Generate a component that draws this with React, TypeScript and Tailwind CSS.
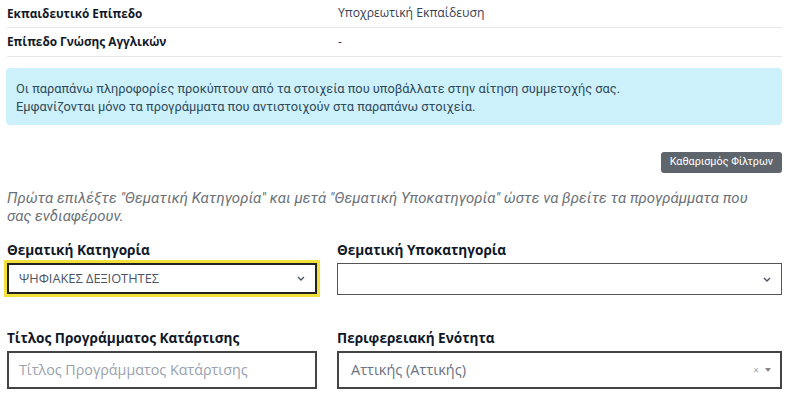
import React from 'react';

const sans = { fontFamily: '"Open Sans", "Noto Sans", sans-serif' };

function Chevron() {
  return (
    <svg width="8" height="5" viewBox="0 0 8 5" className="text-gray-600">
      <path d="M1 1 L4 4 L7 1" fill="none" stroke="currentColor" strokeWidth="1.4" />
    </svg>
  );
}

export default function App() {
  return (
    <div className="w-[794px] h-[398px] bg-white overflow-hidden pl-[7px] pr-[12px] font-['Open_Sans',sans-serif]">
      {/* στοιχεία αίτησης */}
      <div>
        <div className="flex h-[28px] items-center border-b border-gray-200">
          <div className="w-[331px] text-[11.8px] font-bold text-gray-900">Εκπαιδευτικό Επίπεδο</div>
          <div className="text-[12.2px] text-gray-700">Υποχρεωτική Εκπαίδευση</div>
        </div>
        <div className="flex h-[29px] items-center border-b border-gray-200">
          <div className="w-[331px] text-[11.8px] font-bold text-gray-900">Επίπεδο Γνώσης Αγγλικών</div>
          <div className="text-[12.2px] text-gray-700">-</div>
        </div>
      </div>

      <div className="ml-[-1px] mt-[11px] h-[57px] rounded bg-[#cdf1fb] px-[10px] pt-[12px] font-['Roboto',sans-serif] text-[12.8px] leading-[18px] text-[#2f4a5a]">
        <p>Οι παραπάνω πληροφορίες προκύπτουν από τα στοιχεία που υποβάλλατε στην αίτηση συμμετοχής σας.</p>
        <p>Εμφανίζονται μόνο τα προγράμματα που αντιστοιχούν στα παραπάνω στοιχεία.</p>
      </div>

      <div className="mt-[27px] flex justify-end">
        <button className="h-[21px] rounded-[3px] bg-[#5e656c] px-[9px] font-['Roboto',sans-serif] text-[10.8px] text-white">
          Καθαρισμός Φίλτρων
        </button>
      </div>

      <p className="mt-[16px] pr-[8px] font-['Roboto',sans-serif] text-[15px] italic leading-[18px] text-[#6b7178]">
        Πρώτα επιλέξτε "Θεματική Κατηγορία" και μετά "Θεματική Υποκατηγορία" ώστε να βρείτε τα προγράμματα που σας ενδιαφέρουν.
      </p>

      <div className="mt-[15px] grid grid-cols-[310px_1fr] gap-x-[20px]" style={sans}>
        <div>
          <div className="mb-[3px] text-[13.6px] font-bold leading-[20px] text-gray-900">Θεματική Κατηγορία</div>
          <div className="flex h-[31px] items-center justify-between border-2 border-[#222] px-[10px] outline outline-[3px] outline-[#f3e03a] text-[12.8px] text-gray-600">
            <span>ΨΗΦΙΑΚΕΣ ΔΕΞΙΟΤΗΤΕΣ</span>
            <Chevron />
          </div>
        </div>
        <div>
          <div className="mb-[3px] text-[13.6px] font-bold leading-[20px] text-gray-900">Θεματική Υποκατηγορία</div>
          <div className="flex h-[32px] items-center justify-end border border-[#555] px-[10px]">
            <Chevron />
          </div>
        </div>

        <div className="mt-[33px]">
          <div className="mb-[3px] text-[13.6px] font-bold leading-[20px] text-gray-900">Τίτλος Προγράμματος Κατάρτισης</div>
          <div className="flex h-[38px] items-center border-2 border-[#444] px-[10px] text-[14.3px] text-gray-400">
            Τίτλος Προγράμματος Κατάρτισης
          </div>
        </div>
        <div className="mt-[33px]">
          <div className="mb-[3px] text-[13.6px] font-bold leading-[20px] text-gray-900">Περιφερειακή Ενότητα</div>
          <div className="flex h-[38px] items-center justify-between border-2 border-[#444] pl-[12px] pr-[9px] text-[14.5px] text-gray-500">
            <span>Αττικής (Αττικής)</span>
            <span className="flex items-center gap-[6px] text-[10px] text-gray-400">
              <span>×</span>
              <svg width="6" height="4" viewBox="0 0 6 4"><path d="M0 0 H6 L3 4 Z" fill="#888" /></svg>
            </span>
          </div>
        </div>
      </div>
    </div>
  );
}
